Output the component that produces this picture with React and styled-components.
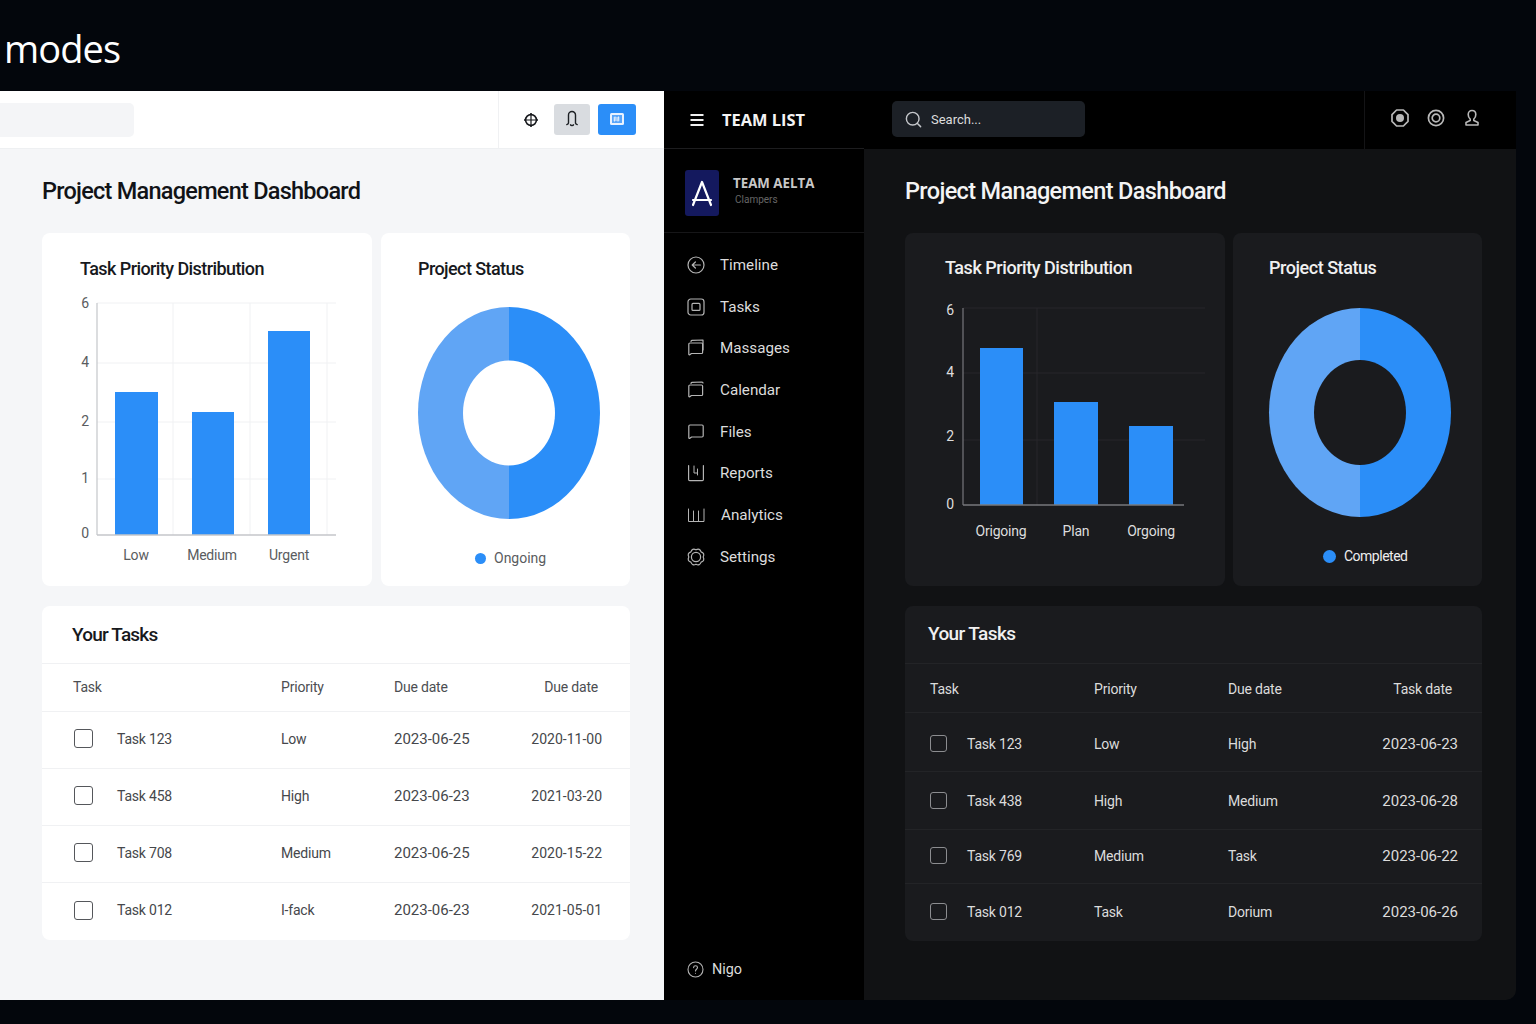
import styled, { createGlobalStyle } from "styled-components";
import { Search } from "lucide-react";

const BLUE = "#2b8ef8";
const BLUE_SOFT = "#60a5f5";

const lightChart = {
  width: 330,
  height: 301,
  axisX: 55,
  top: 18,
  bottom: 250,
  right: 294,
  hLines: [18, 78, 137, 194],
  gridRight: 294,
  vLines: [131, 208, 285],
  ticks: [["6", 18], ["4", 77], ["2", 136], ["1", 193], ["0", 248]],
  tickX: 43,
  labelY: 270,
  bars: [
    { x: 73, w: 43, top: 107, label: "Low", labelX: 94 },
    { x: 150, w: 42, top: 127, label: "Medium", labelX: 170 },
    { x: 226, w: 42, top: 46, label: "Urgent", labelX: 247 },
  ],
};

const darkChart = {
  width: 320,
  height: 301,
  axisX: 58,
  top: 23,
  bottom: 220,
  right: 279,
  hLines: [23, 88, 155],
  gridRight: 300,
  vLines: [132],
  ticks: [["6", 25], ["4", 87], ["2", 151], ["0", 219]],
  tickX: 45,
  labelY: 246,
  bars: [
    { x: 75, w: 43, top: 63, label: "Origoing", labelX: 96 },
    { x: 149, w: 44, top: 117, label: "Plan", labelX: 171 },
    { x: 224, w: 44, top: 141, label: "Orgoing", labelX: 246 },
  ],
};

const lightRows = [
  { task: "Task 123", priority: "Low", due: "2023-06-25", last: "2020-11-00", h: 57 },
  { task: "Task 458", priority: "High", due: "2023-06-23", last: "2021-03-20", h: 57 },
  { task: "Task 708", priority: "Medium", due: "2023-06-25", last: "2020-15-22", h: 57 },
  { task: "Task 012", priority: "I-fack", due: "2023-06-23", last: "2021-05-01", h: 58 },
];

const darkRows = [
  { task: "Task 123", priority: "Low", due: "High", last: "2023-06-23", h: 59, top: 3 },
  { task: "Task 438", priority: "High", due: "Medium", last: "2023-06-28", h: 58 },
  { task: "Task 769", priority: "Medium", due: "Task", last: "2023-06-22", h: 54, bottom: 2 },
  { task: "Task 012", priority: "Task", due: "Dorium", last: "2023-06-26", h: 58, bottom: 2 },
];

// scalloped outline for the settings icon
const gearPath = () => {
  const point = (deg, r) => {
    const a = (deg * Math.PI) / 180;
    return `${(9 + r * Math.cos(a)).toFixed(2)} ${(9 + r * Math.sin(a)).toFixed(2)}`;
  };
  let d = `M${point(0, 7.2)}`;
  for (let i = 0; i < 8; i++) {
    d += `Q${point(i * 45 + 22.5, 9.8)} ${point((i + 1) * 45, 7.2)}`;
  }
  return d + "Z";
};

const Chart = ({ config, dark }) => {
  const grid = dark ? "#26272b" : "#f0f1f3";
  const axis = dark ? "#77787c" : "#c4c6ca";
  const text = dark ? "#dddddd" : "#5a5c60";
  return (
    <ChartSvg width={config.width} height={config.height} viewBox={`0 0 ${config.width} ${config.height}`}>
      {config.hLines.map((y) => (
        <line key={y} x1={config.axisX} x2={config.gridRight} y1={y} y2={y} stroke={grid} />
      ))}
      {config.vLines.map((x) => (
        <line key={x} x1={x} x2={x} y1={config.top} y2={config.bottom} stroke={grid} />
      ))}
      {config.bars.map((b) => (
        <rect key={b.label} x={b.x} y={b.top} width={b.w} height={config.bottom - b.top} fill={BLUE} />
      ))}
      <line x1={config.axisX} x2={config.axisX} y1={config.top} y2={config.bottom} stroke={axis} strokeWidth="1.2" />
      <line x1={config.axisX} x2={config.right} y1={config.bottom} y2={config.bottom} stroke={axis} strokeWidth="1.4" />
      {config.ticks.map(([label, y]) => (
        <ChartText key={label} x={config.tickX} y={y + 5} fill={text} textAnchor="middle">
          {label}
        </ChartText>
      ))}
      {config.bars.map((b) => (
        <ChartText key={b.label} x={b.labelX} y={config.labelY + 5} fill={text} textAnchor="middle">
          {b.label}
        </ChartText>
      ))}
    </ChartSvg>
  );
};

const Donut = ({ cx, cy, ry, hole }) => (
  <ChartSvg width="249" height="240" viewBox="0 0 249 240">
    <path d={`M${cx} ${cy - ry}A91 ${ry} 0 0 0 ${cx} ${cy + ry}Z`} fill={BLUE_SOFT} />
    <path d={`M${cx} ${cy - ry}A91 ${ry} 0 0 1 ${cx} ${cy + ry}Z`} fill={BLUE} />
    <ellipse cx={cx} cy={cy} rx="46" ry="52.5" fill={hole} />
  </ChartSvg>
);

const TaskTable = ({ dark, title, lastHeader, rows }) => (
  <TableCard $dark={dark}>
    <TableTitle $dark={dark}>{title}</TableTitle>
    <HeadRow $dark={dark}>
      <span>Task</span>
      <span>Priority</span>
      <span>Due date</span>
      <HeadLast $dark={dark}>{lastHeader}</HeadLast>
    </HeadRow>
    {rows.map((r) => (
      <BodyRow key={r.task} $dark={dark} $h={r.h} $top={r.top} $bottom={r.bottom}>
        <TaskCell $dark={dark}>
          <Check $dark={dark} />
          {r.task}
        </TaskCell>
        <span>{r.priority}</span>
        <DueCell $date={!dark}>{r.due}</DueCell>
        <LastCell $dark={dark}>{r.last}</LastCell>
      </BodyRow>
    ))}
  </TableCard>
);

const NavGlyph = ({ children }) => (
  <NavSvg viewBox="0 0 18 18" fill="none" stroke="#b4b4b4" strokeWidth="1.2" strokeLinecap="round" strokeLinejoin="round">
    {children}
  </NavSvg>
);

const bubble = "M3 4h11.5c.7 0 1.1.4 1.1 1.1v8.3c0 .7-.4 1.1-1.1 1.1H4.4l-1.6 1.2c-.5.3-1 .1-1-.5V5.2C1.8 4.5 2.3 4 3 4Z";

const navItems = [
  {
    label: "Timeline",
    glyph: (
      <>
        <circle cx="9" cy="9" r="8" />
        <path d="M13.4 9H5.2M8.4 6 5.2 9l3.2 3" />
      </>
    ),
  },
  {
    label: "Tasks",
    glyph: (
      <>
        <rect x="1" y="1" width="16" height="16" rx="2.8" />
        <rect x="5" y="5.4" width="8" height="7" rx="1" />
      </>
    ),
  },
  {
    label: "Massages",
    glyph: (
      <>
        <path d="M4 2.4c0-.6.4-1 1-1.1L16 1v10" />
        <path d={bubble} />
      </>
    ),
  },
  {
    label: "Calendar",
    glyph: (
      <>
        <path d="M4 2.4c0-.6.4-1 1-1.1L15 1c.6 0 1 .4 1 1" />
        <path d={bubble} />
      </>
    ),
  },
  {
    label: "Files",
    glyph: (
      <path d="M3 2h12c.7 0 1.2.5 1.2 1.2v9.6c0 .7-.5 1.2-1.2 1.2H4.6l-1.7 1.3c-.5.3-1.1.1-1.1-.5V3.2C1.8 2.5 2.3 2 3 2Z" />
    ),
  },
  {
    label: "Reports",
    glyph: (
      <>
        <path d="M1.6 1.5v14c0 .7.4 1.1 1.1 1.1h12.6c.7 0 1.1-.4 1.1-1.1v-14" />
        <path d="M7 2v7h3.5M10.5 5v6" strokeWidth="1" />
      </>
    ),
  },
  {
    label: "Analytics",
    offset: 1,
    glyph: <path d="M1.5 3v12.5h15.5V3M6.5 5v10.5M11.5 5v10.5" strokeWidth="1" />,
  },
  {
    label: "Settings",
    glyph: (
      <>
        <path d={gearPath()} />
        <circle cx="9" cy="9" r="4.6" />
      </>
    ),
  },
];

export default function App() {
  return (
    <>
      <GlobalStyle />
      <Page>
        <Heading>modes</Heading>
        <Panels>
          <LightPanel>
            <LightTopbar>
              <SearchStub />
              <LightActions>
                <svg width="16" height="16" viewBox="0 0 16 16" fill="none" stroke="#16181c" strokeWidth="1.6">
                  <circle cx="8" cy="8" r="5.4" />
                  <path d="M8 3v10M3 8h10" strokeWidth="1.2" />
                  <path d="M8 1v1.6M8 13.4V15M1 8h1.6M13.4 8H15" />
                </svg>
                <BellButton>
                  <svg width="18" height="18" viewBox="0 0 18 18" fill="none" stroke="#1d2024" strokeWidth="1.4" strokeLinecap="round">
                    <path d="M5.5 13V5a3.5 3.5 0 0 1 7 0v8c.2 1 1 1.4 1.7 1.6M5.5 13c-.2 1-1 1.4-1.7 1.6" />
                    <path d="M7.5 14.8c.3 1 2.7 1 3 0" />
                  </svg>
                </BellButton>
                <BlueButton>
                  <svg width="16" height="14" viewBox="0 0 16 14" fill="none">
                    <rect x="1" y="1" width="14" height="12" rx="1.5" fill="#e8f2ff" />
                    <rect x="3" y="3" width="10" height="8" fill="#5aa6fa" />
                    <path d="M6 4.5 5.5 9.5M9.5 4.5 9 9.5M4.5 6h6M4.5 8h6" stroke="#e8f2ff" strokeWidth="1" />
                  </svg>
                </BlueButton>
              </LightActions>
            </LightTopbar>
            <LightContent>
              <PageTitle>Project Management Dashboard</PageTitle>
              <CardRow $chart={330} $gap={9}>
                <Card>
                  <CardTitle $pad={38}>Task Priority Distribution</CardTitle>
                  <Chart config={lightChart} />
                </Card>
                <Card>
                  <CardTitle $pad={37}>Project Status</CardTitle>
                  <Donut cx={128} cy={128} ry={106} hole="#ffffff" />
                  <Legend $pad={94} $top={23}>
                    <Dot />
                    Ongoing
                  </Legend>
                </Card>
              </CardRow>
              <TaskTable title="Your Tasks" lastHeader="Due date" rows={lightRows} />
            </LightContent>
          </LightPanel>

          <DarkPanel>
            <Sidebar>
              <SideHeader>
                <svg width="14" height="14" viewBox="0 0 14 14" stroke="#f0f0f0" strokeWidth="2">
                  <path d="M0.5 2h13M0.5 7h13M0.5 12h13" />
                </svg>
                TEAM LIST
              </SideHeader>
              <TeamBlock>
                <TeamLogo>
                  <svg width="24" height="28" viewBox="0 0 24 28" fill="none" stroke="#ffffff" strokeWidth="2.2" strokeLinecap="round" strokeLinejoin="round">
                    <path d="M3 26 12 3l9 23M3 21h18" />
                  </svg>
                </TeamLogo>
                <div>
                  <TeamName>TEAM AELTA</TeamName>
                  <TeamSub>Clampers</TeamSub>
                </div>
              </TeamBlock>
              <Nav>
                {navItems.map((item) => (
                  <NavItem key={item.label} $offset={item.offset}>
                    <NavIcon>
                      <NavGlyph>{item.glyph}</NavGlyph>
                    </NavIcon>
                    <span>{item.label}</span>
                  </NavItem>
                ))}
              </Nav>
              <SideFoot>
                <svg width="17" height="17" viewBox="0 0 17 17" fill="none" stroke="#b4b4b4" strokeWidth="1.1" strokeLinecap="round">
                  <circle cx="8.5" cy="8.5" r="7.5" />
                  <path d="M6.6 6.6c0-2.4 3.9-2.4 3.9 0 0 1.6-2 1.7-2 3.3M8.5 12.2v.1" />
                </svg>
                Nigo
              </SideFoot>
            </Sidebar>

            <DarkMain>
              <DarkTopbar>
                <SearchBox>
                  <Search size={19} color="#c4c6ca" strokeWidth={1.8} />
                  Search...
                </SearchBox>
                <DarkActions>
                  <svg width="20" height="20" viewBox="0 0 20 20" fill="none" stroke="#b8b8b8" strokeWidth="1.7">
                    <path d="M6.6 2h6.8L18 6.6v6.8L13.4 18H6.6L2 13.4V6.6Z" strokeLinejoin="round" />
                    <circle cx="10" cy="10" r="4" fill="#b8b8b8" stroke="none" />
                  </svg>
                  <svg width="20" height="20" viewBox="0 0 20 20" fill="none" stroke="#b8b8b8" strokeWidth="1.7">
                    <circle cx="10" cy="10" r="7.6" />
                    <circle cx="10" cy="10" r="3.8" />
                  </svg>
                  <svg width="20" height="20" viewBox="0 0 20 20" fill="none" stroke="#b8b8b8" strokeWidth="1.6" strokeLinejoin="round">
                    <path d="M10 2.5c2.4 0 3.8 1.8 3.8 4s-1 3.8-2 4.6v1.4l4.2 2v2.5H4v-2.5l4.2-2v-1.4c-1-.8-2-2.4-2-4.6s1.4-4 3.8-4Z" />
                  </svg>
                </DarkActions>
              </DarkTopbar>
              <DarkContent>
                <PageTitle $dark>Project Management Dashboard</PageTitle>
                <CardRow $chart={320} $gap={8}>
                  <Card $dark>
                    <CardTitle $dark $pad={40}>Task Priority Distribution</CardTitle>
                    <Chart config={darkChart} dark />
                  </Card>
                  <Card $dark>
                    <CardTitle $dark $pad={36}>Project Status</CardTitle>
                    <Donut cx={127} cy={127.5} ry={104.5} hole="#1a1b1e" />
                    <Legend $dark $pad={90} $top={21}>
                      <Dot $dark />
                      Completed
                    </Legend>
                  </Card>
                </CardRow>
                <TaskTable dark title="Your Tasks" lastHeader="Task date" rows={darkRows} />
              </DarkContent>
            </DarkMain>
          </DarkPanel>
        </Panels>
      </Page>
    </>
  );
}

const GlobalStyle = createGlobalStyle`
  html, body {
    margin: 0;
    padding: 0;
    background: #03060c;
  }
  * {
    box-sizing: border-box;
  }
`;

const Page = styled.div`
  width: 1536px;
  height: 1024px;
  overflow: hidden;
  background: #03060c;
  font-family: Roboto, "Liberation Sans", sans-serif;
`;

const Heading = styled.h1`
  height: 91px;
  margin: 0;
  padding: 21px 0 0 4px;
  color: #ffffff;
  font-family: "Open Sans", sans-serif;
  font-size: 38px;
  font-weight: 400;
  line-height: 54px;
  letter-spacing: -0.9px;
`;

const Panels = styled.div`
  display: grid;
  grid-template-columns: 664px 852px;
  height: 909px;
`;

const LightPanel = styled.section`
  display: flex;
  flex-direction: column;
  background: #f5f6f8;
`;

const LightTopbar = styled.header`
  display: flex;
  align-items: stretch;
  justify-content: space-between;
  height: 58px;
  background: #ffffff;
  border-bottom: 1px solid #eef0f2;
`;

const SearchStub = styled.div`
  width: 134px;
  height: 34px;
  margin-top: 12px;
  background: #f4f5f7;
  border-radius: 0 5px 5px 0;
`;

const LightActions = styled.div`
  display: flex;
  align-items: center;
  gap: 15px;
  width: 166px;
  padding-left: 24px;
  border-left: 1px solid #f0f1f3;
`;

const BellButton = styled.div`
  display: flex;
  align-items: center;
  justify-content: center;
  width: 36px;
  height: 31px;
  margin-top: -1px;
  background: #d9dce0;
  border-radius: 3px;
`;

const BlueButton = styled(BellButton)`
  width: 38px;
  margin-left: -7px;
  background: ${BLUE};
`;

const LightContent = styled.main`
  flex: 1;
  padding: 0 34px 0 42px;
`;

const PageTitle = styled.h2`
  height: 84px;
  margin: 0;
  padding-top: 27px;
  color: ${(p) => (p.$dark ? "#f4f4f4" : "#111317")};
  font-size: 23.5px;
  font-weight: 500;
  line-height: 30px;
  letter-spacing: ${(p) => (p.$dark ? -0.65 : -0.75)}px;
`;

const CardRow = styled.div`
  display: grid;
  grid-template-columns: ${(p) => p.$chart}px 249px;
  gap: ${(p) => p.$gap}px;
  height: 353px;
  margin-bottom: 20px;
`;

const Card = styled.div`
  overflow: hidden;
  background: ${(p) => (p.$dark ? "#1a1b1e" : "#ffffff")};
  border-radius: 8px;
`;

const CardTitle = styled.h3`
  height: 52px;
  margin: 0;
  padding: ${(p) => (p.$dark ? 24 : 25)}px 0 0 ${(p) => p.$pad}px;
  color: ${(p) => (p.$dark ? "#f0f0f0" : "#17191d")};
  font-size: 18px;
  font-weight: 500;
  line-height: 22px;
  letter-spacing: ${(p) => (p.$dark ? -0.46 : -0.58)}px;
`;

const ChartSvg = styled.svg`
  display: block;
`;

const ChartText = styled.text`
  font-family: Roboto, sans-serif;
  font-size: 14px;
  letter-spacing: -0.2px;
`;

const Legend = styled.div`
  display: flex;
  align-items: center;
  gap: 8px;
  height: 20px;
  margin-top: ${(p) => p.$top}px;
  padding-left: ${(p) => p.$pad}px;
  color: ${(p) => (p.$dark ? "#eeeeee" : "#5a5c60")};
  font-size: 14px;
  letter-spacing: ${(p) => (p.$dark ? -0.5 : 0)}px;
`;

const Dot = styled.i`
  width: ${(p) => (p.$dark ? 13 : 11)}px;
  height: ${(p) => (p.$dark ? 13 : 11)}px;
  background: ${BLUE};
  border-radius: 50%;
`;

const TableCard = styled.div`
  --left: ${(p) => (p.$dark ? 25 : 31)}px;
  --right: ${(p) => (p.$dark ? 24 : 28)}px;
  --cols: ${(p) => (p.$dark ? "164px 134px 1fr auto" : "208px 113px 1fr auto")};
  width: ${(p) => (p.$dark ? 577 : 588)}px;
  background: ${(p) => (p.$dark ? "#1a1b1e" : "#ffffff")};
  border-radius: 8px;
`;

const TableTitle = styled.h3`
  height: 57px;
  margin: 0;
  padding: ${(p) => (p.$dark ? 16 : 17)}px 0 0 ${(p) => (p.$dark ? 23 : 30)}px;
  color: ${(p) => (p.$dark ? "#f0f0f0" : "#17191d")};
  font-size: 19px;
  font-weight: 500;
  line-height: 24px;
  letter-spacing: ${(p) => (p.$dark ? -0.6 : -0.8)}px;
`;

const HeadRow = styled.div`
  display: grid;
  grid-template-columns: var(--cols);
  align-items: center;
  height: ${(p) => (p.$dark ? 49 : 48)}px;
  padding: ${(p) => (p.$dark ? "1px" : "0")} var(--right) ${(p) => (p.$dark ? "0" : "2px")} var(--left);
  color: ${(p) => (p.$dark ? "#dcdcdc" : "#4c4e52")};
  font-size: 14px;
  letter-spacing: -0.2px;
  border-top: 1px solid ${(p) => (p.$dark ? "#232427" : "#f0f1f3")};
`;

const HeadLast = styled.span`
  padding-right: ${(p) => (p.$dark ? 6 : 4)}px;
  text-align: right;
`;

const BodyRow = styled.div`
  display: grid;
  grid-template-columns: var(--cols);
  align-items: center;
  height: ${(p) => p.$h}px;
  padding: ${(p) => p.$top || 0}px var(--right) ${(p) => (p.$dark ? p.$bottom || 0 : 3)}px var(--left);
  color: ${(p) => (p.$dark ? "#dcdcdc" : "#45474b")};
  font-size: 14px;
  letter-spacing: -0.2px;
  border-top: 1px solid ${(p) => (p.$dark ? "#232427" : "#f0f1f3")};
`;

const TaskCell = styled.span`
  display: flex;
  align-items: center;
  gap: ${(p) => (p.$dark ? 20 : 24)}px;
  margin-left: ${(p) => (p.$dark ? 0 : 1)}px;
`;

const DueCell = styled.span`
  font-size: ${(p) => (p.$date ? 15 : 14)}px;
  letter-spacing: ${(p) => (p.$date ? 0 : -0.2)}px;
`;

const LastCell = styled.span`
  font-size: ${(p) => (p.$dark ? 15 : 14)}px;
  letter-spacing: 0;
  text-align: right;
`;

const Check = styled.i`
  width: ${(p) => (p.$dark ? 17 : 19)}px;
  height: ${(p) => (p.$dark ? 17 : 19)}px;
  border: ${(p) => (p.$dark ? "1.5px solid #8c8d90" : "1.5px solid #55575b")};
  border-radius: 3px;
`;

const DarkPanel = styled.section`
  display: grid;
  grid-template-columns: 200px 652px;
  overflow: hidden;
  background: #111214;
  border-radius: 0 0 10px 0;
`;

const Sidebar = styled.aside`
  display: flex;
  flex-direction: column;
  background: #000000;
`;

const SideHeader = styled.div`
  display: flex;
  align-items: center;
  gap: 18px;
  height: 58px;
  padding: 0 0 0 26px;
  color: #f4f4f4;
  font-family: "Open Sans", sans-serif;
  font-size: 16.4px;
  font-weight: 700;
  border-bottom: 1px solid #1d1d1f;
`;

const TeamBlock = styled.div`
  display: flex;
  align-items: center;
  gap: 14px;
  height: 84px;
  padding-left: 21px;
  border-bottom: 1px solid #161618;
`;

const TeamLogo = styled.div`
  display: flex;
  align-items: center;
  justify-content: center;
  width: 34px;
  height: 46px;
  margin-top: 4px;
  background: #14195e;
  border-radius: 3px;
`;

const TeamName = styled.div`
  color: #c8c8c8;
  font-family: "Open Sans", sans-serif;
  font-size: 13.3px;
  font-weight: 700;
  line-height: 18px;
`;

const TeamSub = styled.div`
  padding: 1px 0 0 2px;
  color: #666666;
  font-size: 10px;
  line-height: 14px;
`;

const Nav = styled.nav`
  flex: 1;
  padding: 11.2px 0 0 23px;
`;

const NavItem = styled.div`
  display: flex;
  align-items: center;
  height: 41.7px;
  color: #dcdcdc;
  font-size: 15.2px;
  gap: ${(p) => 15 + (p.$offset || 0)}px;
`;

const NavIcon = styled.span`
  display: flex;
  align-items: center;
  justify-content: center;
  width: 18px;
`;

const NavSvg = styled.svg`
  width: 18px;
  height: 18px;
`;

const SideFoot = styled.div`
  display: flex;
  align-items: center;
  gap: 8px;
  height: 60px;
  padding: 0 0 0 23px;
  margin-bottom: 1px;
  color: #dcdcdc;
  font-size: 14.4px;
`;

const DarkMain = styled.div`
  display: flex;
  flex-direction: column;
`;

const DarkTopbar = styled.header`
  display: flex;
  align-items: stretch;
  justify-content: space-between;
  height: 58px;
  background: #000000;
`;

const SearchBox = styled.div`
  display: flex;
  align-items: center;
  gap: 8px;
  width: 193px;
  height: 36px;
  margin: 10px 0 0 28px;
  padding-left: 12px;
  color: #dddddd;
  font-size: 13px;
  background: #1c2026;
  border-radius: 5px;
`;

const DarkActions = styled.div`
  display: flex;
  align-items: center;
  gap: 16px;
  width: 152px;
  padding: 0 0 4px 25px;
  border-left: 1px solid #141416;
`;

const DarkContent = styled.main`
  flex: 1;
  padding: 0 34px 0 41px;
`;
